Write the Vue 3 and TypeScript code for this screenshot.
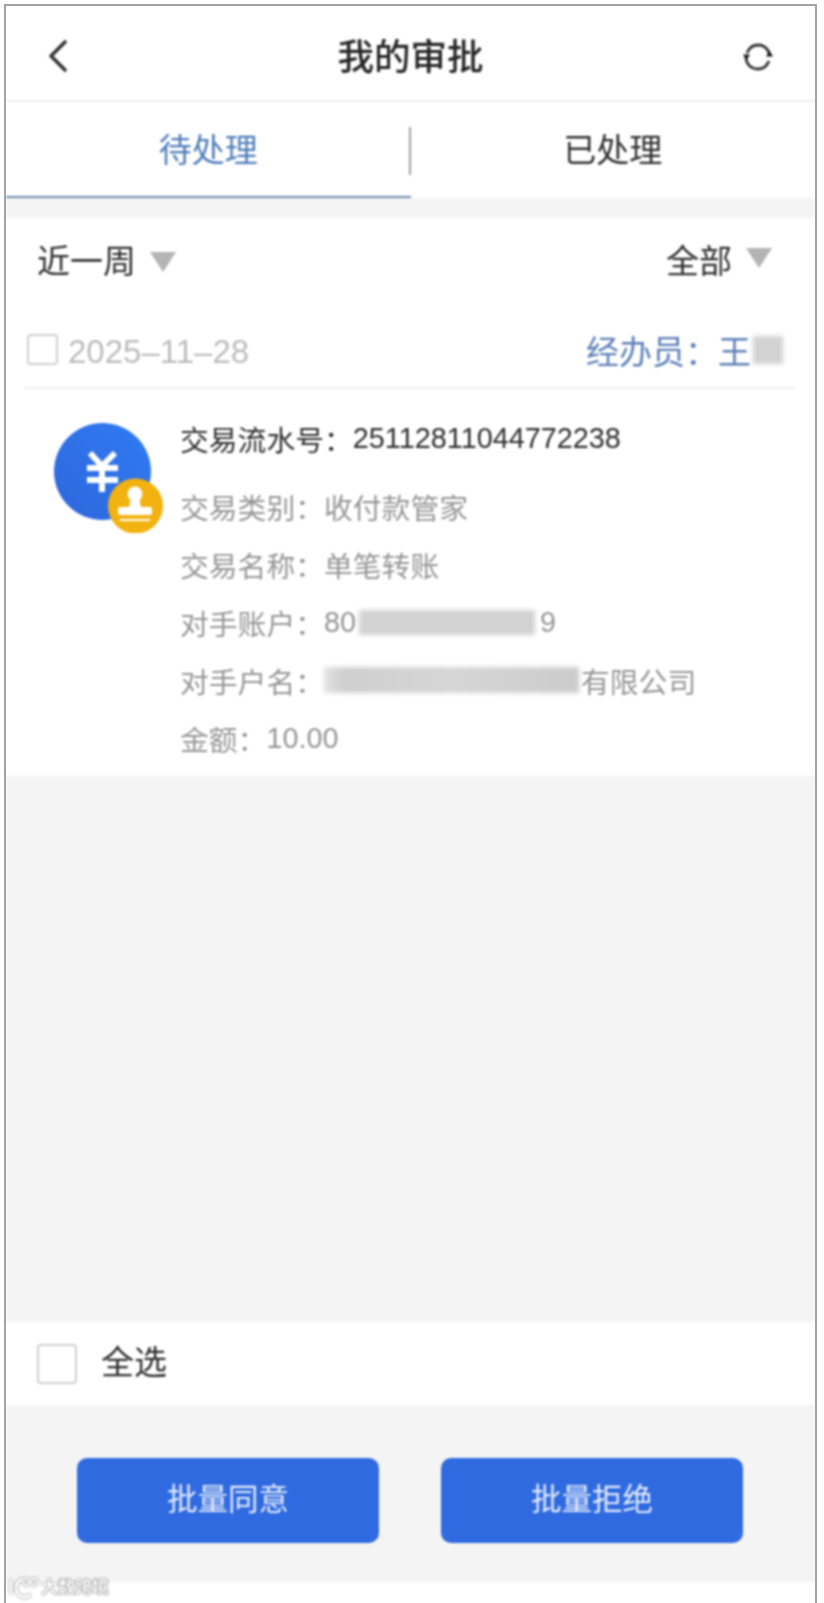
<script setup lang="ts">
interface Row {
  label: string
  value: string
}
const plainRows: Row[] = [
  { label: '交易类别：', value: '收付款管家' },
  { label: '交易名称：', value: '单笔转账' },
]
</script>

<template>
  <div class="frame">
    <div class="screen">
      <header class="nav">
        <svg class="back" width="20" height="34" viewBox="0 0 20 34" fill="none">
          <path d="M17 3 3 17l14 14" stroke="#333" stroke-width="3.6" stroke-linecap="round" stroke-linejoin="round" />
        </svg>
        <h1 class="title">我的审批</h1>
        <svg class="refresh" width="34" height="34" viewBox="0 0 34 34" fill="none">
          <path d="M6 13C8 8 12 5 17 5c6 0 10 4 11.500 9" stroke="#333" stroke-width="2.800" />
          <path d="M28 21c-2 5-6 8-11 8-7 0-12-5-12-12" stroke="#333" stroke-width="2.800" />
          <path d="M2 14.500h7L5.500 20zM25 16.500h7L28.500 11z" fill="#111" />
        </svg>
      </header>

      <nav class="tabs">
        <div class="tab active">待处理</div>
        <div class="tab">已处理</div>
      </nav>

      <main class="main">
        <section class="list">
          <div class="filters">
            <div class="filter">
              <span class="lift">近一周</span>
              <i class="caret"></i>
            </div>
            <div class="filter">
              <span class="lift">全部</span>
              <i class="caret raised"></i>
            </div>
          </div>

          <div class="date-row">
            <div class="date">
              <span class="box small"></span>
              <span>2025–11–28</span>
            </div>
            <div class="agent">经办员：王<span class="mask agent-mask"></span></div>
          </div>

          <article class="card">
            <svg class="icon" width="110" height="111" viewBox="0 0 110 111">
              <defs>
                <linearGradient id="coin" x1="0" y1="1" x2="1" y2="0">
                  <stop offset="0" stop-color="#2f66dd" />
                  <stop offset="1" stop-color="#2f7bf2" />
                </linearGradient>
              </defs>
              <circle cx="48.500" cy="49.500" r="48.500" fill="url(#coin)" />
              <path d="M36 31l12 13 13-13M33 46h31M33 58h31M48 44v26" stroke="#fff" stroke-width="6" fill="none" />
              <circle cx="81.500" cy="84" r="27.500" fill="#f2b20f" />
              <circle cx="81" cy="72" r="7.500" fill="#fff" />
              <path d="M77 75h8l2 10H75z" fill="#fff" />
              <rect x="64" y="85" width="34" height="8" rx="2" fill="#fff" />
              <path d="M66 98h30" stroke="#fff" stroke-width="2" />
            </svg>
            <div class="details">
              <div class="row head">交易流水号：<span>25112811044772238</span></div>
              <div v-for="row in plainRows" :key="row.label" class="row">{{ row.label }}{{ row.value }}</div>
              <div class="row">对手账户：<span>80</span><span class="mask acct-mask"></span><span>9</span></div>
              <div class="row">对手户名：<span class="mask name-mask"></span>有限公司</div>
              <div class="row">金额：<span>10.00</span></div>
            </div>
          </article>
        </section>

        <div class="spacer"></div>

        <div class="select-all">
          <span class="box"></span>
          <span class="lift">全选</span>
        </div>

        <div class="actions">
          <button class="btn" type="button">批量同意</button>
          <button class="btn" type="button">批量拒绝</button>
        </div>
        <div class="tail"></div>
      </main>

      <div class="watermark">
        <svg width="32" height="24" viewBox="0 0 32 24" fill="none">
          <path d="M3 4v14M14 3C9 6 8 9 8 12c0 5 4 9 8 9 3 0 5-1 6-3" stroke="#fff" stroke-width="2.800" />
          <circle cx="18" cy="6" r="3.500" stroke="#fff" stroke-width="1.800" />
          <circle cx="26" cy="6" r="3.500" stroke="#fff" stroke-width="1.800" />
        </svg>
        <span>大数跨境</span>
      </div>
    </div>
  </div>
</template>

<style>
html, body { background: #fff; }
</style>

<style scoped>
.frame {
  box-sizing: border-box;
  width: 813px;
  height: 1599px;
  margin: 4px 0 0 4px;
  border: solid #a3a3a3;
  border-width: 2px 2px 0 2px;
  overflow: hidden;
}
.screen {
  position: relative;
  height: 100%;
  display: flex;
  flex-direction: column;
  background: #fff;
  color: #2e2e2e;
  font-family: "Liberation Sans", "Noto Sans CJK SC", sans-serif;
  font-size: 33px;
  filter: blur(0.8px);
}
.nav {
  position: relative;
  flex: none;
  box-sizing: border-box;
  height: 96px;
  display: flex;
  align-items: center;
  justify-content: center;
  border-bottom: 2px solid #ececec;
}
.title {
  margin: 10px 0 0;
  font-size: 36.500px;
  font-weight: 500;
  line-height: 1;
  color: #262626;
}
.back {
  position: absolute;
  left: 42px;
  top: 33px;
}
.refresh {
  position: absolute;
  left: 735px;
  top: 34px;
}
.tabs {
  flex: none;
  height: 96px;
  display: flex;
}
.tab {
  position: relative;
  flex: 1;
  display: flex;
  align-items: center;
  justify-content: center;
  padding-bottom: 4px;
}
.tab.active {
  color: #4f7dbb;
  border-bottom: 2px solid #6f8cb0;
  padding-bottom: 2px;
}
.tab.active::after {
  content: "";
  position: absolute;
  right: 0;
  top: 25px;
  height: 48px;
  width: 2px;
  background: #a0a0a0;
}
.main {
  flex: 1;
  display: flex;
  flex-direction: column;
  padding-top: 20px;
  background: #f4f4f4;
}
.list {
  flex: none;
  background: #fff;
}
.filters {
  height: 90px;
  display: flex;
  align-items: center;
  justify-content: space-between;
  padding: 0 43px 0 31px;
}
.filter {
  display: flex;
  align-items: center;
  gap: 14px;
}
.lift {
  padding-bottom: 8px;
}
.caret {
  width: 26px;
  height: 20px;
  margin-bottom: 2px;
  background: #b4b4b4;
  clip-path: polygon(0 0, 100% 0, 50% 100%);
}
.caret.raised {
  margin-bottom: 10px;
}
.date-row {
  box-sizing: border-box;
  height: 81px;
  margin: 0 20px 0 19px;
  padding: 9px 12px 0 2px;
  display: flex;
  align-items: center;
  justify-content: space-between;
  border-bottom: 2px solid #f0f0f0;
}
.date {
  display: flex;
  align-items: center;
  gap: 10px;
  color: #bcbcbc;
}
.box {
  flex: none;
  box-sizing: border-box;
  width: 40px;
  height: 40px;
  border: 2px solid #cfcfcf;
  border-radius: 4px;
  background: #fff;
}
.box.small {
  width: 31px;
  height: 31px;
  margin-bottom: 6px;
}
.agent {
  display: flex;
  align-items: center;
  padding-bottom: 4px;
  color: #5d80b8;
}
.mask {
  display: inline-block;
  flex: none;
  background: #d2d2d2;
  filter: blur(2px);
}
.agent-mask {
  width: 30px;
  height: 28px;
  margin-left: 2px;
}
.card {
  display: flex;
  align-items: flex-start;
  padding: 20px 0 9px 48px;
}
.icon {
  flex: none;
  margin-top: 13px;
}
.details {
  margin-left: 16px;
  font-size: 28.800px;
  color: #969696;
}
.row {
  display: flex;
  align-items: center;
  height: 58px;
  white-space: nowrap;
}
.row.head {
  margin-bottom: 10px;
  color: #2e2e2e;
}
.acct-mask {
  width: 176px;
  height: 25px;
  margin: 0 5px 0 3px;
}
.name-mask {
  width: 255px;
  height: 26px;
  margin-right: 2px;
  background: linear-gradient(90deg, #e2e2e2 0, #cfcfcf 8%, #d6d6d6 50%, #cbcbcb 100%);
}
.spacer {
  flex: 1;
}
.select-all {
  flex: none;
  height: 83px;
  display: flex;
  align-items: center;
  gap: 24px;
  padding-left: 31px;
  background: #fff;
}
.actions {
  flex: none;
  display: flex;
  gap: 62px;
  padding: 53px 0 39px 71px;
}
.btn {
  width: 302px;
  height: 85px;
  padding: 0 0 8px;
  border: 0;
  border-radius: 10px;
  background: #2f6ae0;
  color: #e6edfb;
  font: inherit;
  font-size: 30.500px;
}
.tail {
  flex: none;
  height: 21px;
  background: #fff;
}
.watermark {
  position: absolute;
  left: 2px;
  bottom: 3px;
  display: flex;
  align-items: center;
  gap: 1px;
  color: #fff;
  font-size: 17px;
  font-weight: 700;
  line-height: 22px;
  text-shadow: 0 0 1px #666, 0 0 1px #666, 0 0 2px #888;
}
.watermark svg {
  filter: drop-shadow(0 0 1px #666);
}
</style>
